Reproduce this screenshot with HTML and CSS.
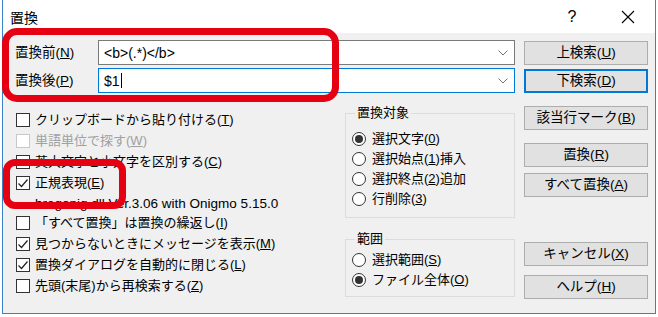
FILE: index.html
```html
<!DOCTYPE html>
<html lang="ja">
<head>
    <meta charset="UTF-8">
    <title>置換</title>
    <link rel="stylesheet" href="styles.css">
</head>
<body>
    <div class="window">
        <div class="titlebar">
            <span class="title">置換</span>
            <span class="help">?</span>
            <span class="close">
                <svg width="14" height="14" viewBox="0 0 14 14"><path d="M1 1L13 13M13 1L1 13" stroke="#000" stroke-width="1.1" fill="none"/></svg>
            </span>
        </div>

        <div class="dialog">
            <div class="main">
                <div class="field">
                    <span class="field-label">置換前(<u>N</u>)</span>
                    <div class="combo">
                        <span class="combo-value">&lt;b&gt;(.*)&lt;/b&gt;</span>
                        <svg class="chevron" width="10" height="6" viewBox="0 0 10 6"><path d="M0.5 0.5L5 5L9.5 0.5" stroke="#707070" fill="none"/></svg>
                    </div>
                </div>
                <div class="field">
                    <span class="field-label">置換後(<u>P</u>)</span>
                    <div class="combo combo-focus">
                        <span class="combo-value">$1<span class="caret"></span></span>
                        <svg class="chevron" width="10" height="6" viewBox="0 0 10 6"><path d="M0.5 0.5L5 5L9.5 0.5" stroke="#707070" fill="none"/></svg>
                    </div>
                </div>

                <div class="lower">
                    <div class="checks">
                        <div class="check"><span class="box"></span><span>クリップボードから貼り付ける(<u>T</u>)</span></div>
                        <div class="check disabled"><span class="box"></span><span>単語単位で探す(<u>W</u>)</span></div>
                        <div class="check"><span class="box"></span><span>英大文字と小文字を区別する(<u>C</u>)</span></div>
                        <div class="check"><span class="box checked"><svg width="12" height="12" viewBox="0 0 12 12"><path d="M1.5 6.5L4.5 9.5L10.5 2.5" stroke="#222" stroke-width="1.2" fill="none"/></svg></span><span>正規表現(<u>E</u>)</span></div>
                        <div class="version">bregonig.dll Ver.3.06 with Onigmo 5.15.0</div>
                        <div class="check"><span class="box"></span><span>「すべて置換」は置換の繰返し(<u>I</u>)</span></div>
                        <div class="check"><span class="box checked"><svg width="12" height="12" viewBox="0 0 12 12"><path d="M1.5 6.5L4.5 9.5L10.5 2.5" stroke="#222" stroke-width="1.2" fill="none"/></svg></span><span>見つからないときにメッセージを表示(<u>M</u>)</span></div>
                        <div class="check"><span class="box checked"><svg width="12" height="12" viewBox="0 0 12 12"><path d="M1.5 6.5L4.5 9.5L10.5 2.5" stroke="#222" stroke-width="1.2" fill="none"/></svg></span><span>置換ダイアログを自動的に閉じる(<u>L</u>)</span></div>
                        <div class="check"><span class="box"></span><span>先頭(末尾)から再検索する(<u>Z</u>)</span></div>
                    </div>

                    <div class="groups">
                        <fieldset class="group group-target">
                            <legend>置換対象</legend>
                            <div class="radio"><span class="dot checked"></span><span>選択文字(<u>0</u>)</span></div>
                            <div class="radio"><span class="dot"></span><span>選択始点(<u>1</u>)挿入</span></div>
                            <div class="radio"><span class="dot"></span><span>選択終点(<u>2</u>)追加</span></div>
                            <div class="radio"><span class="dot"></span><span>行削除(<u>3</u>)</span></div>
                        </fieldset>
                        <fieldset class="group group-range">
                            <legend>範囲</legend>
                            <div class="radio"><span class="dot"></span><span>選択範囲(<u>S</u>)</span></div>
                            <div class="radio"><span class="dot checked"></span><span>ファイル全体(<u>O</u>)</span></div>
                        </fieldset>
                    </div>
                </div>
            </div>

            <div class="buttons">
                <button class="btn">上検索(<u>U</u>)</button>
                <button class="btn btn-default gap-xs">下検索(<u>D</u>)</button>
                <button class="btn gap-m">該当行マーク(<u>B</u>)</button>
                <button class="btn gap-m">置換(<u>R</u>)</button>
                <button class="btn gap-s">すべて置換(<u>A</u>)</button>
                <button class="btn gap-l">キャンセル(<u>X</u>)</button>
                <button class="btn gap-s2">ヘルプ(<u>H</u>)</button>
            </div>
        </div>

        <div class="mark mark-search"></div>
        <div class="mark mark-regex"></div>
    </div>
</body>
</html>
```

FILE: styles.css
```css
body {
    margin: 0;
    background: #fff;
    font-family: "Liberation Sans", "Noto Sans CJK JP", sans-serif;
    font-size: 13px;
    color: #000;
    text-autospace: no-autospace;
}
u {
    text-underline-offset: 1px;
}
.window {
    position: relative;
    box-sizing: border-box;
    margin-left: 2px;
    width: 654px;
    height: 314px;
    border: 1px solid #3b82c4;
    border-top: 0;
    background: #f0f0f0;
}
.titlebar {
    height: 33px;
    background: #fff;
    display: flex;
    align-items: center;
}
.title {
    flex: 1;
    padding-left: 7px;
    font-size: 14px;
}
.help {
    width: 46px;
    text-align: center;
    font-size: 16px;
}
.close {
    width: 46px;
    margin: 0 4px 0 10px;
    display: flex;
    justify-content: center;
}
.dialog {
    display: flex;
    gap: 9px;
    padding: 7px 6px 0 12px;
}
.main {
    width: 500px;
}
.field {
    display: flex;
    align-items: center;
    height: 25px;
}
.field + .field {
    margin-top: 3px;
}
.field-label {
    width: 83px;
    line-height: 18px;
    font-size: 13.5px;
}
.combo {
    box-sizing: border-box;
    width: 417px;
    height: 25px;
    display: flex;
    align-items: center;
    padding: 0 6px 0 5px;
    border: 1px solid #7a7a7a;
    background: #fff;
}
.combo-focus {
    border-color: #0078d7;
}
.combo-value {
    flex: 1;
    display: flex;
    align-items: center;
    line-height: 18px;
    font-size: 14px;
}
.caret {
    display: inline-block;
    width: 1px;
    height: 15px;
    margin-left: 1px;
    background: #000;
}
.lower {
    display: flex;
    margin-top: 9px;
}
.checks {
    width: 330px;
    padding: 7.5px 0 0 1px;
}
.check {
    display: flex;
    align-items: center;
    gap: 5px;
    height: 21px;
    line-height: 18px;
}
.box {
    box-sizing: border-box;
    width: 14px;
    height: 14px;
    display: flex;
    align-items: center;
    justify-content: center;
    border: 1px solid #333;
    background: #fff;
}
.disabled {
    color: #a0a0a0;
}
.disabled .box {
    border-color: #c8c8c8;
}
.version {
    height: 19px;
    line-height: 19px;
    padding-left: 19px;
    font-size: 13.5px;
}
.groups {
    width: 170px;
    padding-top: 3px;
}
.group {
    box-sizing: border-box;
    min-width: 0;
    width: 170px;
    margin: 0;
    padding: 8px 0 8px 6px;
    border: 1px solid #dcdcdc;
}
.group legend {
    margin-left: 3px;
    padding: 0 2px;
    line-height: 16px;
}
.group-range {
    margin-top: 13px;
    padding-top: 3px;
    padding-bottom: 6px;
}
.radio {
    display: flex;
    align-items: center;
    gap: 6px;
    height: 20px;
    line-height: 18px;
}
.dot {
    box-sizing: border-box;
    width: 14px;
    height: 14px;
    display: flex;
    align-items: center;
    justify-content: center;
    border: 1px solid #333;
    border-radius: 50%;
    background: #fff;
}
.dot.checked::after {
    content: "";
    width: 8px;
    height: 8px;
    border-radius: 50%;
    background: #333;
}
.buttons {
    display: flex;
    flex-direction: column;
    width: 124px;
}
.btn {
    box-sizing: border-box;
    width: 124px;
    height: 24px;
    margin: 1px 0 0;
    padding: 0;
    border: 1px solid #adadad;
    background: #e1e1e1;
    font-family: inherit;
    font-size: 13.5px;
    line-height: 18px;
    color: #000;
}
.btn-default {
    border: 2px solid #0078d7;
}
.gap-xs { margin-top: 4px; }
.gap-s { margin-top: 6px; }
.gap-s2 { margin-top: 9px; }
.gap-m { margin-top: 13px; }
.gap-l { margin-top: 45px; }
.mark {
    position: absolute;
    box-sizing: border-box;
    border: 7px solid #e50012;
    pointer-events: none;
}
.mark-search {
    left: -1px;
    top: 28px;
    width: 337px;
    height: 74px;
    border-radius: 15px;
}
.mark-regex {
    left: 0;
    top: 159px;
    width: 123px;
    height: 50px;
    border-radius: 12px;
}
```
